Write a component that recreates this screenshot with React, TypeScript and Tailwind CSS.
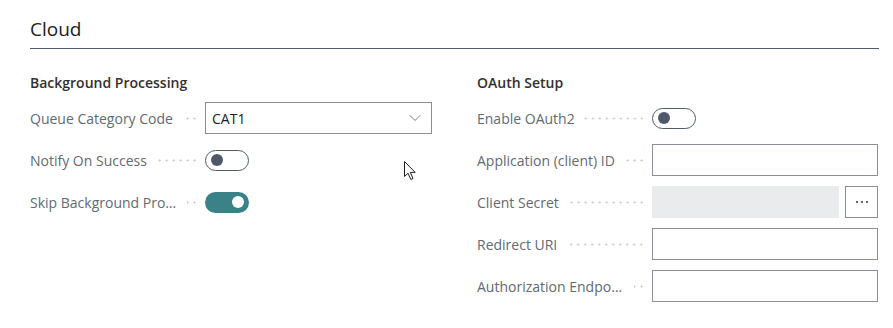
import { ChevronDown } from "lucide-react";

type Field = {
  label: string;
  kind: "select" | "toggle" | "text" | "secret";
  value?: string;
  on?: boolean;
};

const LEFT: Field[] = [
  { label: "Queue Category Code", kind: "select", value: "CAT1" },
  { label: "Notify On Success", kind: "toggle", on: false },
  { label: "Skip Background Processing", kind: "toggle", on: true },
];

const RIGHT: Field[] = [
  { label: "Enable OAuth2", kind: "toggle", on: false },
  { label: "Application (client) ID", kind: "text" },
  { label: "Client Secret", kind: "secret" },
  { label: "Redirect URI", kind: "text" },
  { label: "Authorization Endpoint", kind: "text" },
];

function Toggle({ on }: { on?: boolean }) {
  return on ? (
    <div className="w-[44px] h-[21px] rounded-full bg-[#3a8188] flex items-center justify-end pr-[5px]">
      <div className="w-[12px] h-[12px] rounded-full bg-white" />
    </div>
  ) : (
    <div className="w-[44px] h-[21px] rounded-full border border-[#505c6d] bg-white flex items-center pl-[5px]">
      <div className="w-[12px] h-[12px] rounded-full bg-[#4f5868]" />
    </div>
  );
}

function Control({ f }: { f: Field }) {
  if (f.kind === "toggle") return <Toggle on={f.on} />;
  if (f.kind === "select")
    return (
      <div className="flex-1 h-[32px] border border-[#8a8e96] flex items-center pl-[6px] pr-[6px] text-[14px] text-[#212121]">
        <span className="flex-1">{f.value}</span>
        <ChevronDown className="w-[20px] h-[20px] text-[#605e5c]" strokeWidth={1} />
      </div>
    );
  if (f.kind === "secret")
    return (
      <div className="flex-1 flex gap-[6px]">
        <div className="flex-1 h-[32px] bg-[#eaebec]" />
        <div className="w-[33px] h-[32px] border border-[#8a8e96] flex items-center justify-center gap-[3px]">
          <span className="w-[2px] h-[2px] bg-[#323130] rounded-full" />
          <span className="w-[2px] h-[2px] bg-[#323130] rounded-full" />
          <span className="w-[2px] h-[2px] bg-[#323130] rounded-full" />
        </div>
      </div>
    );
  return <div className="flex-1 h-[32px] border border-[#8a8e96] bg-white" />;
}

function Row({ f }: { f: Field }) {
  return (
    <div className="h-[42px] flex items-center">
      <div className="w-[175px] pr-[7px] flex items-center min-w-0">
        <span className="truncate text-[14px] text-[#626a74] max-w-[148px]">{f.label}</span>
        <div className="flex-1 min-w-[10px] ml-[9px] h-[3px] bg-[radial-gradient(circle,#c9ccd0_0.9px,transparent_1.2px)] bg-[length:7px_3px] bg-repeat-x bg-right" />
      </div>
      <Control f={f} />
    </div>
  );
}

function Group({ title, fields }: { title: string; fields: Field[] }) {
  return (
    <div className="flex flex-col">
      <div className="h-[38px] flex items-center text-[14px] font-semibold text-[#323130]">{title}</div>
      <div className="flex flex-col -mt-[4px]">
        {fields.map((f) => (
          <Row key={f.label} f={f} />
        ))}
      </div>
    </div>
  );
}

export default function App() {
  return (
    <div className="relative w-[893px] h-[328px] bg-white pl-[30px] pr-[14px] pt-[16px] font-['Segoe_UI','Open_Sans',sans-serif]">
      <div className="text-[19px] leading-[26px] text-[#212121] pb-[6px] border-b border-[#505c6d]">Cloud</div>
      <div className="grid grid-cols-[402px_401px] gap-x-[45px] pt-[14px]">
        <Group title="Background Processing" fields={LEFT} />
        <Group title="OAuth Setup" fields={RIGHT} />
      </div>
      {/* mouse pointer */}
      <svg className="absolute left-[404px] top-[161px]" width="13" height="20" viewBox="0 0 13 20">
        <path d="M0.5 0.5 L0.5 15.5 L4 12.2 L6.8 18.5 L9 17.5 L6.3 11.4 L11.2 11.4 Z" fill="white" stroke="#1f1f1f" strokeWidth="1" strokeLinejoin="round" />
      </svg>
    </div>
  );
}
